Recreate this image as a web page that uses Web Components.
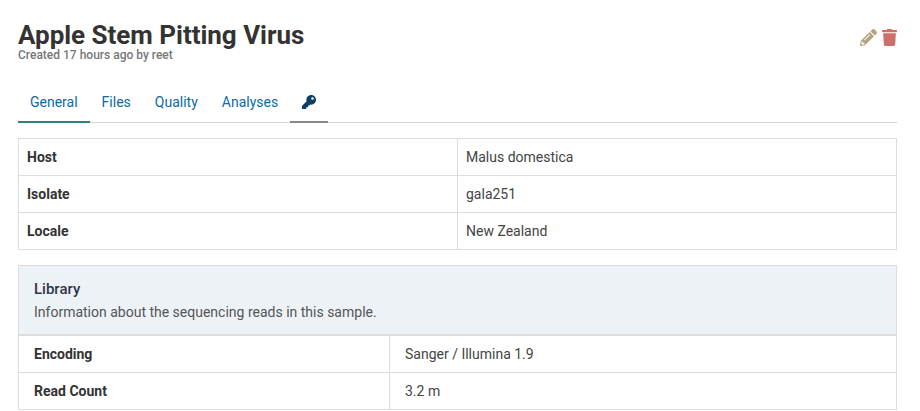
<!DOCTYPE html>
<html><head><meta charset="utf-8">
<style>
html,body{margin:0;padding:0;background:#fff;overflow:hidden;height:411px}
body{font-family:Roboto,"Liberation Sans",sans-serif;color:#333;font-size:14px}
</style></head><body>
<template id="t-page"><style>
:host{display:flex;flex-direction:column;padding:0 23px 0 18px;box-sizing:border-box;width:920px}
</style><slot></slot></template>

<template id="t-header"><style>
:host{display:flex;justify-content:space-between;align-items:flex-start;padding-top:22px;height:45px}
h1{margin:0;font:700 26px/26px Roboto,sans-serif;color:#333;letter-spacing:-.02px}
small{display:block;font:500 12px/14px Roboto,sans-serif;color:#777}
.icons{display:flex;gap:5px;margin-top:7px}
svg{display:block;height:17px}
</style><div><h1><slot name="title"></slot></h1><small><slot name="sub"></slot></small></div>
<div class="icons">
<svg width="17" viewBox="0 0 512 512"><path fill="#b5a27f" d="M497.9 142.1l-46.1 46.1c-4.7 4.7-12.3 4.7-17 0l-111-111c-4.7-4.7-4.7-12.3 0-17l46.1-46.1c18.7-18.7 49.1-18.7 67.9 0l60.1 60.1c18.8 18.7 18.8 49.1 0 67.9zM284.2 99.8L21.6 362.4.4 483.9c-2.9 16.4 11.4 30.6 27.8 27.8l121.5-21.3 262.6-262.6c4.7-4.7 4.7-12.3 0-17l-111-111c-4.8-4.7-12.4-4.7-17.1 0zM124.1 339.9c-5.5-5.5-5.5-14.3 0-19.8l154-154c5.5-5.5 14.3-5.5 19.8 0s5.5 14.3 0 19.8l-154 154c-5.5 5.5-14.3 5.5-19.8 0zM88 424h48v36.3l-64.5 11.3-31.1-31.1L51.7 376H88v48z"/></svg>
<svg width="15" viewBox="0 0 448 512"><path fill="#cd6f6a" d="M432 32H312l-9.4-18.7A24 24 0 0 0 281.1 0H166.8a23.72 23.72 0 0 0-21.4 13.3L136 32H16A16 16 0 0 0 0 48v32a16 16 0 0 0 16 16h416a16 16 0 0 0 16-16V48a16 16 0 0 0-16-16zM53.2 467a48 48 0 0 0 47.9 45h245.8a48 48 0 0 0 47.9-45L416 128H32z"/></svg>
</div></template>

<template id="t-tabs"><style>
:host{display:flex;margin-top:15px;border-bottom:1px solid #d5d5d5;height:40px;box-sizing:content-box;margin-bottom:15px}
</style><slot></slot></template>

<template id="t-tab"><style>
:host{display:flex;align-items:center;justify-content:center;padding:0 12px;height:41px;box-sizing:border-box;padding-top:1px;border-bottom:2px solid transparent;color:#0b6aa5;font:400 14px Roboto,sans-serif}
:host([active]){border-bottom-color:#2c8178;color:#0b6aa5}
:host([muted]){border-bottom-color:#888}
</style><slot></slot></template>

<template id="t-table"><style>
:host{display:grid;grid-template-columns:var(--cols,439px 1fr);border:1px solid #ddd;border-bottom:0;box-sizing:border-box}
</style><slot></slot></template>

<template id="t-cell"><style>
:host{display:flex;align-items:center;height:37px;box-sizing:border-box;padding:0 8px;border-bottom:1px solid #ddd;font:400 14px Roboto,sans-serif;color:#444}
:host([head]){font-weight:700;border-right:1px solid #ddd;color:#333}
</style><slot></slot></template>

<template id="t-panel"><style>
:host{display:block;border:1px solid #ddd;border-bottom:0;margin-top:15px}
header{background:#edf2f7;padding:14px 15px 0;height:70px;box-sizing:border-box;border-bottom:2px solid #ddd}
b{display:block;font:500 15px/18px Roboto,sans-serif;color:#2d3748}
p{margin:5px 0 0;font:400 14px/18px Roboto,sans-serif;color:#555}
</style><header><b><slot name="title"></slot></b><p><slot name="desc"></slot></p></header><slot></slot></template>

<x-page>
<x-header><span slot="title">Apple Stem Pitting Virus</span><span slot="sub">Created 17 hours ago by reet</span></x-header>
<x-tabs><x-tab active>General</x-tab><x-tab>Files</x-tab><x-tab>Quality</x-tab><x-tab>Analyses</x-tab>
<x-tab muted><svg width="14" height="14" viewBox="0 0 512 512" style="display:block"><path fill="#0d3f66" d="M512 176.001C512 273.203 433.202 352 336 352c-11.22 0-22.19-1.062-32.827-3.069l-24.012 27.014A23.999 23.999 0 0 1 261.223 384H224v40c0 13.255-10.745 24-24 24h-40v40c0 13.255-10.745 24-24 24H24c-13.255 0-24-10.745-24-24v-78.059c0-6.365 2.529-12.47 7.029-16.971l161.802-161.802C163.108 213.814 160 195.271 160 176 160 78.798 238.797.001 335.999 0 433.488-.001 512 78.511 512 176.001zM336 128c0 26.51 21.49 48 48 48s48-21.49 48-48-21.49-48-48-48-48 21.49-48 48z" /></svg></x-tab></x-tabs>
<x-table><x-cell head>Host</x-cell><x-cell>Malus domestica</x-cell><x-cell head>Isolate</x-cell><x-cell>gala251</x-cell><x-cell head>Locale</x-cell><x-cell>New Zealand</x-cell></x-table>
<x-panel><span slot="title">Library</span><span slot="desc">Information about the sequencing reads in this sample.</span>
<x-table style="--cols:371px 1fr;border:0"><x-cell head style="padding-left:15px">Encoding</x-cell><x-cell style="padding-left:15px">Sanger / Illumina 1.9</x-cell><x-cell head style="padding-left:15px">Read Count</x-cell><x-cell style="padding-left:15px">3.2 m</x-cell></x-table>
</x-panel>
</x-page>
<script>
for(const [n,t] of [['x-page','t-page'],['x-header','t-header'],['x-tabs','t-tabs'],['x-tab','t-tab'],['x-table','t-table'],['x-cell','t-cell'],['x-panel','t-panel']]){
customElements.define(n,class extends HTMLElement{constructor(){super();this.attachShadow({mode:'open'}).appendChild(document.getElementById(t).content.cloneNode(true));}});
}
</script>
</body></html>
